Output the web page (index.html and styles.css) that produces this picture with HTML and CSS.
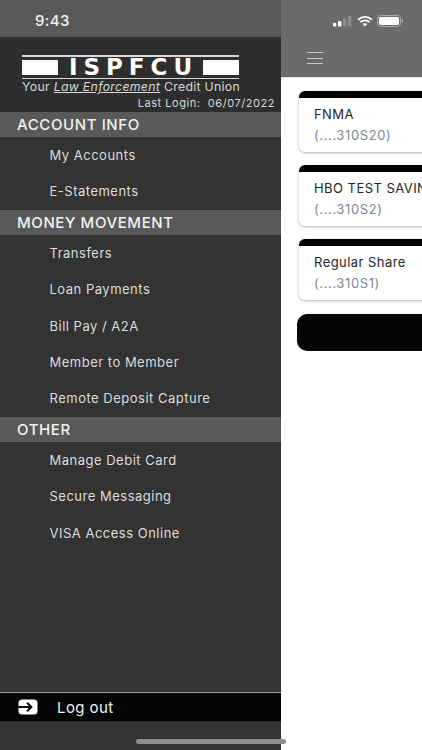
FILE: index.html
```html
<!DOCTYPE html>
<html lang="en">
<head>
    <meta charset="UTF-8">
    <meta name="viewport" content="width=device-width, initial-scale=1.0">
    <title>ISPFCU</title>
    <link rel="stylesheet" href="styles.css">
</head>
<body>
    <div class="app">
        <aside class="sidebar">
            <div class="status-left"><span class="clock">9:43</span></div>
            <div class="brand">
                <div class="logo">
                    <div class="logo-rule"></div>
                    <div class="logo-row">
                        <span class="logo-block"></span>
                        <span class="logo-name">ISPFCU</span>
                        <span class="logo-block"></span>
                    </div>
                    <div class="logo-rule"></div>
                    <div class="logo-tag">Your <em>Law Enforcement</em> Credit Union</div>
                </div>
                <div class="last-login">Last Login:&nbsp; 06/07/2022</div>
            </div>
            <nav class="menu">
                <h2 class="menu-title">ACCOUNT INFO</h2>
                <ul class="menu-list">
                    <li><a href="#">My Accounts</a></li>
                    <li><a href="#">E-Statements</a></li>
                </ul>
                <h2 class="menu-title">MONEY MOVEMENT</h2>
                <ul class="menu-list">
                    <li><a href="#">Transfers</a></li>
                    <li><a href="#">Loan Payments</a></li>
                    <li><a href="#">Bill Pay / A2A</a></li>
                    <li><a href="#">Member to Member</a></li>
                    <li><a href="#">Remote Deposit Capture</a></li>
                </ul>
                <h2 class="menu-title">OTHER</h2>
                <ul class="menu-list">
                    <li><a href="#">Manage Debit Card</a></li>
                    <li><a href="#">Secure Messaging</a></li>
                    <li><a href="#">VISA Access Online</a></li>
                </ul>
            </nav>
            <a class="logout" href="#">
                <svg class="logout-icon" width="20" height="16" viewBox="0 0 20 16">
                    <rect x="0.5" y="0.5" width="19" height="15" rx="3.5" fill="#fff"/>
                    <path d="M0 8H13M9 3.8L13.4 8L9 12.2" fill="none" stroke="#0a0a0a" stroke-width="2"/>
                </svg>
                <span>Log out</span>
            </a>
        </aside>

        <main class="content">
            <header class="topbar">
                <div class="status-right">
                    <svg width="20" height="11" viewBox="0 0 20 11">
                        <rect x="0" y="7" width="3.4" height="3.5" rx="0.8" fill="#fff"/>
                        <rect x="5" y="5" width="3.4" height="5.5" rx="0.8" fill="#fff"/>
                        <rect x="10" y="2.6" width="3.4" height="7.9" rx="0.8" fill="#8e8e8e"/>
                        <rect x="15" y="0" width="3.4" height="10.5" rx="0.8" fill="#8e8e8e"/>
                    </svg>
                    <svg width="16" height="11" viewBox="0 0 16 11">
                        <path d="M1 3.8C5 0 11 0 15 3.8M3.4 6.2C6 3.8 10 3.8 12.6 6.2" fill="none" stroke="#fff" stroke-width="1.7"/>
                        <path d="M5.6 8.1C7 6.9 9 6.9 10.4 8.1L8 10.6Z" fill="#fff"/>
                    </svg>
                    <svg width="27" height="12" viewBox="0 0 27 12">
                        <rect x="0.5" y="0.5" width="23" height="11" rx="3" fill="none" stroke="#a9a9a9"/>
                        <rect x="2" y="2" width="20" height="8" rx="1.8" fill="#fff"/>
                        <rect x="24.6" y="4" width="1.4" height="4" rx="0.7" fill="#a9a9a9"/>
                    </svg>
                </div>
                <button class="burger" aria-label="Menu"><span></span><span></span><span></span></button>
            </header>
            <section class="accounts">
                <div class="card">
                    <div class="card-name">FNMA</div>
                    <div class="card-num">(....310S20)</div>
                </div>
                <div class="card">
                    <div class="card-name">HBO TEST SAVINGS</div>
                    <div class="card-num">(....310S2)</div>
                </div>
                <div class="card">
                    <div class="card-name">Regular Share</div>
                    <div class="card-num">(....310S1)</div>
                </div>
                <div class="black-btn"></div>
            </section>
        </main>
        <div class="home-bar"></div>
    </div>
</body>
</html>
```

FILE: styles.css
```css
* {
    box-sizing: border-box;
}

html, body {
    margin: 0;
    padding: 0;
    height: 100%;
    overflow: hidden;
}

body {
    font-family: Inter, "Liberation Sans", sans-serif;
    background-color: #fff;
}

.app {
    position: relative;
    display: flex;
    width: 422px;
    height: 750px;
    overflow: hidden;
}

/* left drawer */
.sidebar {
    flex: 0 0 281px;
    width: 281px;
    height: 750px;
    display: flex;
    flex-direction: column;
    background-color: #333333;
    color: #e6e6e6;
}

.status-left {
    height: 37px;
    padding: 12px 0 0 35px;
    background-color: #595959;
}

.clock {
    display: block;
    font-size: 15px;
    line-height: 18px;
    font-weight: 500;
    letter-spacing: 0.4px;
    color: #f0f0f0;
}

.brand {
    height: 75px;
    padding: 18px 6px 0 22px;
    background-color: #2e2e2e;
}

.logo {
    width: 217px;
}

.logo-rule {
    height: 1.5px;
    background-color: #d8d8d8;
}

.logo-row {
    display: flex;
    align-items: center;
    justify-content: space-between;
    height: 21px;
}

.logo-block {
    width: 36px;
    height: 15px;
    background-color: #fff;
}

.logo-name {
    margin-right: -6px;
    font-family: "DejaVu Sans", sans-serif;
    font-size: 23px;
    line-height: 21px;
    font-weight: 700;
    letter-spacing: 6px;
    color: #fff;
}

.logo-tag {
    font-size: 12.3px;
    line-height: 15px;
    letter-spacing: 0.3px;
    white-space: nowrap;
    color: #d6d6d6;
}

.logo-tag em {
    text-decoration: underline;
}

.last-login {
    margin-top: 2px;
    font-size: 11px;
    line-height: 14px;
    letter-spacing: 0.55px;
    text-align: right;
    white-space: nowrap;
    color: #d6d6d6;
}

.menu {
    flex: 1;
}

.menu-title {
    margin: 0;
    height: 25px;
    padding-left: 17px;
    font-size: 15px;
    line-height: 25px;
    font-weight: 500;
    letter-spacing: 0.6px;
    color: #f2f2f2;
    background-color: #595959;
}

.menu-list {
    list-style-type: none;
    margin: 0;
    padding: 0;
}

.menu-list a {
    display: block;
    height: 36.4px;
    padding-left: 49.5px;
    font-size: 13px;
    line-height: 36.4px;
    letter-spacing: 0.5px;
    text-decoration: none;
    color: #dcdcdc;
}

.logout {
    display: flex;
    align-items: center;
    gap: 19px;
    height: 29px;
    margin-bottom: 29px;
    padding-left: 18px;
    border-top: 1.5px solid #a0a0a0;
    background-color: #050505;
    font-size: 15px;
    letter-spacing: 0.4px;
    text-decoration: none;
    color: #f2f2f2;
}

/* main page peeking out to the right */
.content {
    flex: 0 0 141px;
    width: 141px;
    height: 750px;
    overflow: hidden;
    background-color: #fff;
}

.topbar {
    height: 78px;
    padding-top: 14px;
    background-color: #6b6b6b;
    border-bottom: 1px solid #e0e0e0;
}

.status-right {
    display: flex;
    align-items: center;
    gap: 4px;
    height: 14px;
    padding-left: 52px;
}

.burger {
    display: flex;
    flex-direction: column;
    gap: 4.3px;
    width: 16px;
    margin: 24px 0 0 26px;
    padding: 0;
    border: none;
    background: none;
}

.burger span {
    display: block;
    height: 1.3px;
    background-color: #c8c8c8;
}

.accounts {
    display: flex;
    flex-direction: column;
    width: 300px;
    padding: 13px 0 0 18px;
}

.card {
    height: 61px;
    margin-bottom: 13px;
    padding-left: 15px;
    border-radius: 6px;
    overflow: hidden;
    background-color: #fff;
    box-shadow: 0 1px 3px rgba(0, 0, 0, 0.3);
}

.card::before {
    content: "";
    display: block;
    height: 7px;
    margin: 0 0 8px -15px;
    background-color: #000;
}

.card-name {
    font-size: 13px;
    line-height: 16px;
    letter-spacing: 0.45px;
    white-space: nowrap;
    color: #262626;
}

.card-num {
    margin-top: 5px;
    font-size: 13px;
    line-height: 16px;
    letter-spacing: 0.6px;
    color: #7f8690;
}

.black-btn {
    height: 37px;
    margin: 1px 0 0 -2px;
    border-radius: 10px;
    background-color: #050505;
}

.home-bar {
    position: absolute;
    left: 136px;
    top: 739px;
    width: 150px;
    height: 4.5px;
    border-radius: 3px;
    background-color: #8f8f8f;
}
```
